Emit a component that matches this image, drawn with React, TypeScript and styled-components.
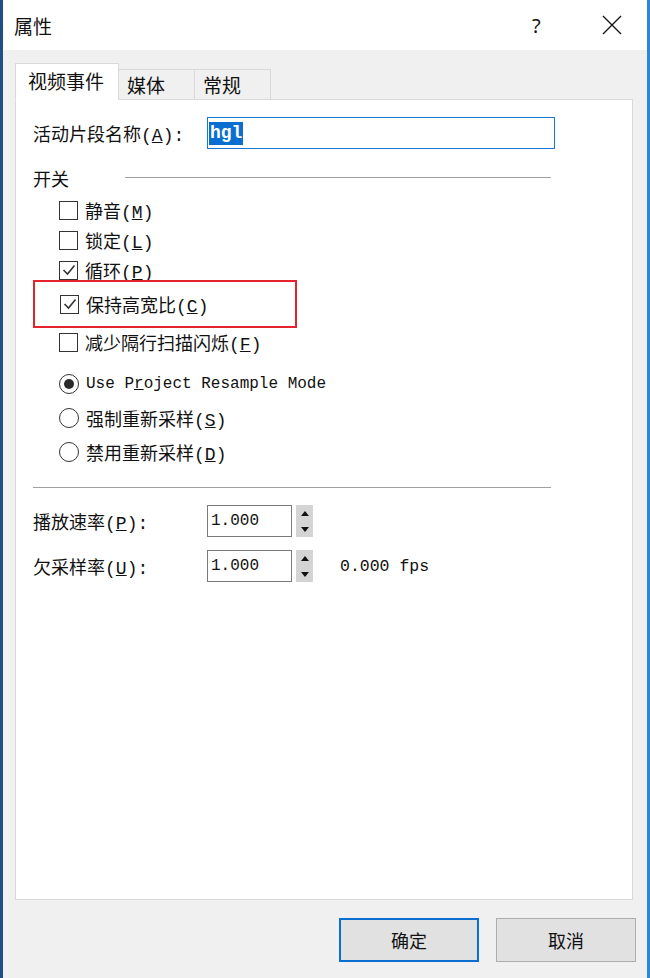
import React from "react";
import styled, { createGlobalStyle } from "styled-components";

const GlobalStyle = createGlobalStyle`
  html, body { margin: 0; padding: 0; background: #f0f0f0; }
  * { box-sizing: border-box; }
`;

const cjk = `"Noto Sans CJK SC", "Noto Sans", sans-serif`;
const mixed = `"Liberation Mono", "Noto Sans CJK SC", monospace`;

const Window = styled.div`
  width: 650px;
  height: 978px;
  display: flex;
  flex-direction: column;
  background: #f0f0f0;
  border-left: 3px solid #1f4f86;
  border-right: 3px solid #2f86d8;
  color: #111;
`;

const TitleBar = styled.div`
  height: 50px;
  flex: none;
  display: flex;
  align-items: center;
  background: #fff;
  padding-left: 11px;
`;

const Title = styled.span`
  font-family: ${cjk};
  font-size: 19px;
  flex: 1;
`;

const HelpGlyph = styled.span`
  font-family: "Noto Sans", sans-serif;
  font-size: 20px;
  width: 20px;
  margin-right: 50px;
`;

const CloseBtn = styled.span`
  display: flex;
  width: 20px;
  height: 20px;
  margin-right: 25px;
`;

const Body = styled.div`
  flex: 1;
  display: flex;
  flex-direction: column;
  padding: 14px 14px 0 12px;
`;

const TabRow = styled.div`
  height: 36px;
  display: flex;
  align-items: flex-end;
  position: relative;
  z-index: 1;
  margin-bottom: -1px;
`;

const Tab = styled.div<{ $active?: boolean }>`
  font-family: ${cjk};
  font-size: 19px;
  display: flex;
  align-items: center;
  padding-left: ${(p) => (p.$active ? 12 : 8)}px;
  width: ${(p) => (p.$active ? 104 : 76)}px;
  height: ${(p) => (p.$active ? 37 : 31)}px;
  background: ${(p) => (p.$active ? "#fff" : "#f0f0f0")};
  border: 1px solid #d9d9d9;
  border-bottom: ${(p) => (p.$active ? "1px solid #fff" : "1px solid #d9d9d9")};
  border-left: ${(p) => (p.$active ? "1px solid #d9d9d9" : "none")};
  padding-bottom: ${(p) => (p.$active ? 2 : 0)}px;
`;

const Panel = styled.div`
  height: 801px;
  background: #fff;
  border: 1px solid #d9d9d9;
  padding: 17px 0 0 17px;
  display: flex;
  flex-direction: column;
`;

const FieldRow = styled.div<{ $gap?: number }>`
  display: flex;
  align-items: center;
  height: 32px;
  margin-top: ${(p) => p.$gap ?? 0}px;
`;

const Label = styled.span`
  font-family: ${mixed};
  font-size: 18px;
  width: 174px;
  flex: none;
  white-space: nowrap;
`;

const NameInput = styled.div`
  width: 348px;
  height: 32px;
  border: 1.5px solid #1a78d0;
  display: flex;
  align-items: center;
  padding-left: 1px;
`;

const Selected = styled.span`
  font-family: "Liberation Mono", monospace;
  font-weight: bold;
  font-size: 18px;
  background: #0a6fd0;
  color: #fff;
  padding: 0 1px;
  line-height: 23px;
`;

const GroupHeader = styled.div`
  margin-top: 17px;
  height: 24px;
  display: flex;
  align-items: center;
  width: 518px;
`;

const GroupTitle = styled.span`
  font-family: ${cjk};
  font-size: 18px;
  width: 92px;
`;

const Rule = styled.div<{ $gap?: number }>`
  flex: 1;
  height: 1px;
  background: #a0a0a0;
  margin-top: ${(p) => p.$gap ?? 0}px;
`;

const Options = styled.div<{ $gap: number }>`
  display: flex;
  flex-direction: column;
  padding-left: 26px;
  margin-top: ${(p) => p.$gap}px;
`;

const OptionRow = styled.div<{ $h?: number; $gap?: number }>`
  display: flex;
  align-items: center;
  height: ${(p) => p.$h ?? 30}px;
  margin-top: ${(p) => p.$gap ?? 0}px;
  font-family: ${mixed};
  font-size: 18px;
  white-space: nowrap;
`;

const Highlight = styled.div`
  width: 264px;
  height: 48px;
  margin: -5px 0 -1px -26px;
  border: 2px solid #e3242b;
  padding-left: 25px;
  display: flex;
  align-items: center;
`;

const Box = styled.span`
  width: 19px;
  height: 19px;
  flex: none;
  border: 1.5px solid #333;
  margin-right: 7px;
  display: flex;
  align-items: center;
  justify-content: center;
  background: #fff;
`;

const Radio = styled.span`
  width: 20px;
  height: 20px;
  flex: none;
  border: 1.5px solid #333;
  border-radius: 50%;
  margin-right: 7px;
  display: flex;
  align-items: center;
  justify-content: center;
`;

const Dot = styled.span`
  width: 10px;
  height: 10px;
  border-radius: 50%;
  background: #2a2a2a;
`;

const MonoText = styled.span<{ $size?: number }>`
  font-family: "Liberation Mono", monospace;
  font-size: ${(p) => p.$size ?? 16}px;
`;

const Separator = styled.div`
  width: 518px;
  height: 1px;
  background: #a0a0a0;
  margin-top: 18px;
`;

const SpinInput = styled.div`
  width: 85px;
  height: 32px;
  border: 1px solid #7a7a7a;
  display: flex;
  align-items: center;
  padding-left: 3px;
  font-family: "Liberation Mono", monospace;
  font-size: 16px;
`;

const SpinButtons = styled.div`
  width: 17px;
  height: 32px;
  margin-left: 4px;
  background: #d4d4d4;
  display: flex;
  flex-direction: column;
  align-items: center;
  justify-content: space-between;
  padding: 6px 0 5px;
`;

const Fps = styled(MonoText)`
  margin-left: 27px;
`;

const Footer = styled.div`
  display: flex;
  justify-content: flex-end;
  gap: 17px;
  margin-top: 18px;
  margin-right: -3px;
`;

const Button = styled.div<{ $primary?: boolean }>`
  width: 140px;
  height: 44px;
  display: flex;
  align-items: center;
  justify-content: center;
  font-family: ${cjk};
  font-size: 18px;
  background: #e1e1e1;
  border: ${(p) => (p.$primary ? "2px solid #0a6fd0" : "1px solid #adadad")};
`;

const Check = () => (
  <svg width="14" height="12" viewBox="0 0 14 12">
    <polyline points="1.5,6 5.5,10 12.5,1.5" fill="none" stroke="#333" strokeWidth="1.6" />
  </svg>
);

const Up = () => (
  <svg width="8" height="5" viewBox="0 0 8 5">
    <polygon points="4,0 8,5 0,5" fill="#111" />
  </svg>
);

const Down = () => (
  <svg width="8" height="5" viewBox="0 0 8 5">
    <polygon points="0,0 8,0 4,5" fill="#111" />
  </svg>
);

const CheckOption = ({ checked, text, k }: { checked?: boolean; text: string; k: string }) => (
  <>
    <Box>{checked && <Check />}</Box>
    <span>
      {text}(<u>{k}</u>)
    </span>
  </>
);

export default function App() {
  return (
    <Window>
      <GlobalStyle />
      <TitleBar>
        <Title>属性</Title>
        <HelpGlyph>?</HelpGlyph>
        <CloseBtn>
          <svg width="20" height="20" viewBox="0 0 20 20">
            <path d="M1 1 L19 19 M19 1 L1 19" stroke="#111" strokeWidth="1.3" fill="none" />
          </svg>
        </CloseBtn>
      </TitleBar>

      <Body>
        <TabRow>
          <Tab $active>视频事件</Tab>
          <Tab>媒体</Tab>
          <Tab>常规</Tab>
        </TabRow>

        <Panel>
          <FieldRow>
            <Label>
              活动片段名称(<u>A</u>):
            </Label>
            <NameInput>
              <Selected>hgl</Selected>
            </NameInput>
          </FieldRow>

          <GroupHeader>
            <GroupTitle>开关</GroupTitle>
            <Rule $gap={-2} />
          </GroupHeader>

          <Options $gap={5}>
            <OptionRow>
              <CheckOption text="静音" k="M" />
            </OptionRow>
            <OptionRow>
              <CheckOption text="锁定" k="L" />
            </OptionRow>
            <OptionRow>
              <CheckOption checked text="循环" k="P" />
            </OptionRow>
            <Highlight>
              <OptionRow>
                <CheckOption checked text="保持高宽比" k="C" />
              </OptionRow>
            </Highlight>
            <OptionRow>
              <CheckOption text="减少隔行扫描闪烁" k="F" />
            </OptionRow>
          </Options>

          <Options $gap={10}>
            <OptionRow $h={34}>
              <Radio>
                <Dot />
              </Radio>
              <MonoText>
                Use P<u>r</u>oject Resample Mode
              </MonoText>
            </OptionRow>
            <OptionRow $h={34}>
              <Radio />
              <span>
                强制重新采样(<u>S</u>)
              </span>
            </OptionRow>
            <OptionRow $h={34}>
              <Radio />
              <span>
                禁用重新采样(<u>D</u>)
              </span>
            </OptionRow>
          </Options>

          <Separator />

          <FieldRow $gap={17}>
            <Label>
              播放速率(<u>P</u>):
            </Label>
            <SpinInput>1.000</SpinInput>
            <SpinButtons>
              <Up />
              <Down />
            </SpinButtons>
          </FieldRow>

          <FieldRow $gap={13}>
            <Label>
              欠采样率(<u>U</u>):
            </Label>
            <SpinInput>1.000</SpinInput>
            <SpinButtons>
              <Up />
              <Down />
            </SpinButtons>
            <Fps $size={16.5}>0.000 fps</Fps>
          </FieldRow>
        </Panel>

        <Footer>
          <Button $primary>确定</Button>
          <Button>取消</Button>
        </Footer>
      </Body>
    </Window>
  );
}
